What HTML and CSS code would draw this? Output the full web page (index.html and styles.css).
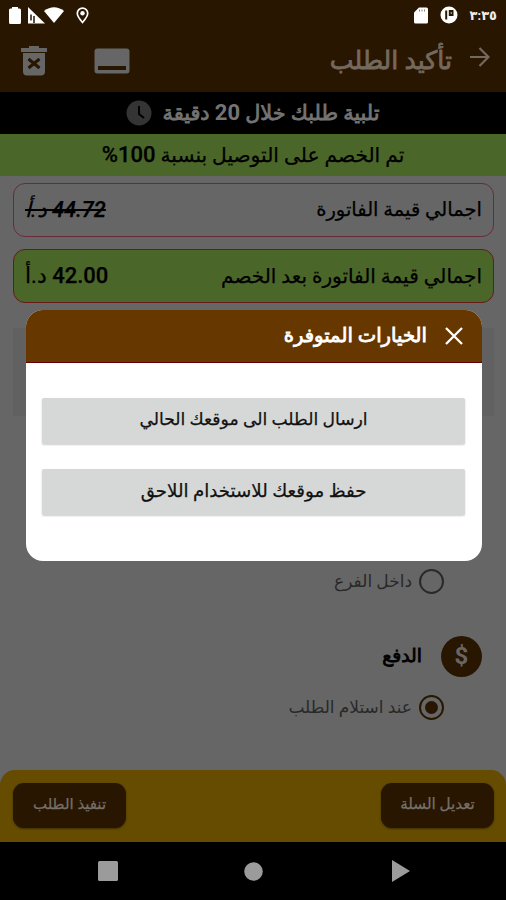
FILE: index.html
```html
<!DOCTYPE html>
<html lang="ar" dir="rtl">
<head>
<meta charset="utf-8">
<title>تأكيد الطلب</title>
<link rel="stylesheet" href="styles.css">
</head>
<body>
<div class="screen">
  <header class="top">
    <div class="status">
      <div class="status-group">
        <span class="clock">٣:٣٥</span>
        <svg width="18" height="18" viewBox="0 0 18 18"><circle cx="9" cy="9" r="8.5" fill="#fff"/><path d="M6.200 4.500v9M9.800 5v4h2.700V5z" fill="none" stroke="#281600" stroke-width="2"/></svg>
        <svg width="14" height="17" viewBox="0 0 14 17"><path d="M5 .5h7.500q1.500 0 1.500 1.500v13q0 1.500-1.500 1.500h-11Q0 16.500 0 15V5.500z" fill="#fff"/><path d="M5.500 2.500v2M8 2.500v2M10.500 2.500v2" stroke="#8b8178"/></svg>
      </div>
      <div class="status-group left">
        <svg class="pin" width="13" height="17" viewBox="0 0 13 17"><path d="M6.500 15.500C3 11.500 1.300 9 1.300 6.300a5.200 5.200 0 0 1 10.400 0c0 2.700-1.700 5.200-5.200 9.200z" fill="none" stroke="#fff" stroke-width="1.700"/><circle cx="6.500" cy="6.300" r="2.200" fill="#fff"/></svg>
        <svg class="wifi" width="20" height="16" viewBox="0 0 20 16"><path d="M0 4Q10-3.500 20 4L10 16z" fill="#fff"/></svg>
        <svg class="signal" width="17" height="17" viewBox="0 0 17 17"><path d="M0 0l17 16.500H0z" fill="#fff"/><path d="M3 7.500v6M6 9v7" stroke="#281600" stroke-width="1.500"/></svg>
        <svg width="12" height="17" viewBox="0 0 12 17"><path d="M3 0h6v1.500h1.500q1.500 0 1.500 1.500V15.500q0 1.500-1.500 1.500h-9Q0 17 0 15.500V3Q0 1.500 1.500 1.500H3z" fill="#fff"/></svg>
      </div>
    </div>
    <div class="appbar">
      <svg class="back" width="20" height="20" viewBox="0 0 20 20"><path d="M0 10h18M9.500 1l9 9-9 9" fill="none" stroke="#74695e" stroke-width="2.200"/></svg>
      <h1><span class="fit heavy t-title">تأكيد الطلب</span></h1>
      <svg class="card-icon" width="36" height="26" viewBox="0 0 36 26"><rect x=".5" y=".5" width="35" height="25" rx="3" fill="#666"/><path d="M4 20h28" stroke="#281600" stroke-width="4"/></svg>
      <svg width="26" height="30" viewBox="0 0 26 30"><path d="M0 2h8V0h10v2h8v4H0z" fill="#666"/><path d="M2 7h22v18.500q0 4-4 4H6q-4 0-4-4z" fill="#666"/><path d="M7.500 13l11 9M18.500 13l-11 9" stroke="#281600" stroke-width="3"/></svg>
    </div>
  </header>
  <div class="strip eta">
    <span class="fit heavy t-eta">تلبية طلبك خلال <b>20</b> دقيقة</span>
    <svg width="26" height="26" viewBox="0 0 26 26"><circle cx="13" cy="13" r="12.500" fill="#343434"/><path d="M13 6v8l5 4" fill="none" stroke="#000" stroke-width="2"/></svg>
  </div>
  <div class="strip promo"><span class="fit t-promo">تم الخصم على التوصيل بنسبة <b>100%</b></span></div>
  <main>
    <div class="total"><span class="fit t-total">اجمالي قيمة الفاتورة</span><span class="fit t-old"><b>44.72</b> د.أ</span></div>
    <div class="total after"><span class="fit t-after">اجمالي قيمة الفاتورة بعد الخصم</span><span class="fit t-new"><b>42.00</b> د.أ</span></div>
    <div class="panel"></div>
    <div class="option branch"><i class="radio"></i><span class="fit t-branch">داخل الفرع</span></div>
    <div class="payment"><span class="coin">$</span><span class="fit heavy t-pay">الدفع</span></div>
    <div class="option"><i class="radio on"></i><span class="fit t-cod">عند استلام الطلب</span></div>
  </main>
  <footer>
    <div class="action"><span class="fit t-edit">تعديل السلة</span></div>
    <div class="action"><span class="fit t-do">تنفيذ الطلب</span></div>
  </footer>
  <nav>
    <svg width="18" height="22" viewBox="0 0 18 22"><path d="M0 0l18 11L0 22z" fill="#9b9b9b"/></svg>
    <svg width="19" height="19" viewBox="0 0 19 19"><circle cx="9.500" cy="9.500" r="9.300" fill="#9b9b9b"/></svg>
    <svg width="20" height="20" viewBox="0 0 20 20"><rect width="20" height="20" rx="1.500" fill="#9b9b9b"/></svg>
  </nav>
  <section class="dialog">
    <div class="dialog-head">
      <svg width="18" height="18" viewBox="0 0 18 18"><path d="M1 1l16 16M17 1L1 17" stroke="#fff" stroke-width="2.300"/></svg>
      <span class="fit heavy t-dialog">الخيارات المتوفرة</span>
    </div>
    <div class="dialog-body">
      <button><span class="fit t-send">ارسال الطلب الى موقعك الحالي</span></button>
      <button><span class="fit t-save">حفظ موقعك للاستخدام اللاحق</span></button>
    </div>
  </section>
</div>
</body>
</html>
```
FILE: styles.css
```css
* { box-sizing: border-box; }
body { margin: 0; background: #666; font-family: Roboto, "DejaVu Sans", sans-serif; }
svg { display: block; flex: none; }
.screen { position: relative; width: 506px; height: 900px; display: flex; flex-direction: column; overflow: hidden; background: #666; }
.fit { display: block; white-space: nowrap; line-height: 1; -webkit-text-stroke: .25px currentColor; }
.heavy { font-weight: 400; -webkit-text-stroke-width: .8px; }
.top { height: 92px; background: #281600; }
.status { height: 30px; display: flex; justify-content: space-between; padding: 0 9px; }
.status-group { display: flex; align-items: center; gap: 12px; }
.status-group.left { gap: 0; }
.clock { color: #eee; font-size: 13px; font-weight: bold; }
.wifi { margin-right: 12px; }
.signal { margin: 0 -1px 0 7px; }
.appbar { height: 62px; display: flex; align-items: center; padding: 0 16px 0 21px; }
.back { margin-top: -8px; }
h1 { margin: 0 18px 0 auto; color: #74695e; }
.card-icon { margin-left: 47px; }
.strip { height: 42px; display: flex; align-items: center; justify-content: center; }
.eta { background: #000; color: #747474; gap: 10px; }
.eta b { font-size: 22px; line-height: 1; -webkit-text-stroke: 0; }
.promo { background: #4a6628; color: #000; }
.promo b { font-size: 22px; font-weight: 500; line-height: 1; letter-spacing: .4px; }
.promo .fit { font-size: 20.2px; }
main { flex: 1; padding: 7px 12px 0 13px; display: flex; flex-direction: column; }
.total { height: 54px; margin-bottom: 12px; border: 1.5px solid #672b3a; border-radius: 12px; padding: 0 11px; display: flex; align-items: center; justify-content: space-between; color: #000; }
.total.after { background: #4a6628; border-color: #661a1a; }
.total b { font-weight: 500; letter-spacing: .5px; }
.panel { height: 88px; margin-top: 13px; background: #616161; }
.option { height: 26px; padding-right: 50px; display: flex; align-items: center; gap: 7px; color: #292929; }
.branch { margin-top: 152px; }
.radio { width: 25px; height: 25px; border: 2px solid #292929; border-radius: 50%; display: grid; place-items: center; }
.radio.on { border-color: #281600; }
.radio.on::after { content: ""; width: 13px; height: 13px; border-radius: 50%; background: #281600; }
.payment { height: 42px; margin: 41px 0 17px; padding-right: 12px; display: flex; align-items: center; gap: 19px; color: #000; }
.coin { width: 41px; height: 41px; border-radius: 50%; background: #281600; color: #666; display: grid; place-items: center; font-size: 24px; line-height: 1; font-weight: 700; }
footer { height: 72px; flex: none; background: #664c00; border-radius: 15px 15px 0 0; display: flex; justify-content: space-between; padding: 13px 12px 13px 13px; }
.action { width: 113px; height: 45px; border-radius: 11px; background: #281600; color: #77706a; padding-bottom: 2px; display: grid; place-items: center; box-shadow: 0 1px 2px #3d2d00; }
nav { height: 58px; flex: none; background: #000; display: flex; align-items: center; justify-content: space-between; padding: 0 96px 0 98px; }
nav svg:nth-child(2) { margin-left: 1px; margin-right: 5px; }
.dialog { position: absolute; left: 26px; top: 310px; width: 456px; height: 251px; border-radius: 17px; background: #fff; overflow: hidden; }
.dialog-head { height: 53px; padding-right: 19px; display: flex; align-items: center; gap: 18px; background: #663800; border-bottom: 1px solid #660000; color: #fff; }
.dialog-body { padding: 35px 17px 0 16px; display: flex; flex-direction: column; gap: 25px; }
button { height: 46px; border: 0; border-radius: 2px; padding: 0 0 2px; background: #d6d8d7; color: #111; font-family: inherit; display: grid; place-items: center; box-shadow: 0 1px 2px #ccc; }
.t-title { font-size: 25.2px; }
.t-eta { font-size: 20.8px; }
.t-total { font-size: 19.5px; }
.t-after { font-size: 20px; }
.t-old { font-size: 21.8px; font-style: italic; text-decoration: line-through; }
.t-new { font-size: 22px; }
.t-branch, .t-cod { font-size: 17px; -webkit-text-stroke-width: 0; }
.t-pay { font-size: 18.8px; }
.t-edit { font-size: 15.2px; }
.t-do { font-size: 15px; }
.t-dialog { font-size: 19.6px; }
.t-send { font-size: 17.2px; }
.t-save { font-size: 18.2px; }
```
